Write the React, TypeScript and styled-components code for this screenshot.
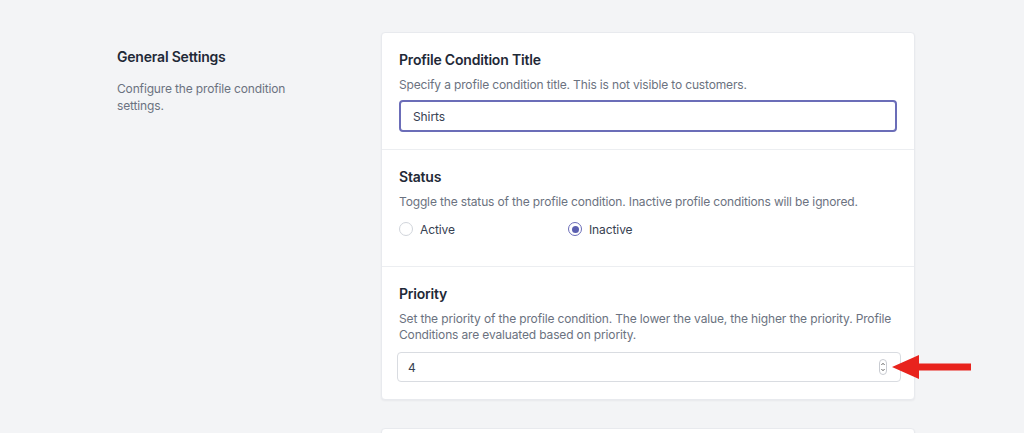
import React from "react";
import styled, { createGlobalStyle } from "styled-components";

const Global = createGlobalStyle`
  html, body { margin: 0; padding: 0; background: #f3f4f6; }
  body { font-family: Inter, "Noto Sans", "Liberation Sans", sans-serif; color: #1f2937; -webkit-font-smoothing: antialiased; }
  * { box-sizing: border-box; }
`;

const Page = styled.div`
  padding: 0 109px 0 117px;
  height: 433px;
  overflow: hidden;
`;

const PageHeading = styled.h1`
  margin: -22px 0 0 0;
  height: 22px;
  font-size: 20px;
  line-height: 24px;
  font-weight: 600;
  color: #374151;
`;

const Layout = styled.div`
  display: grid;
  grid-template-columns: 264px 1fr;
  margin-top: 32px;
`;

const Aside = styled.div`
  padding-top: 15px;
`;

const AsideTitle = styled.h2`
  margin: 0;
  font-size: 14px;
  line-height: 20px;
  font-weight: 600;
  letter-spacing: -0.2px;
  color: #1f2937;
`;

const AsideText = styled.p`
  margin: 13px 0 0 0;
  font-size: 12px;
  line-height: 17px;
  letter-spacing: -0.15px;
  color: #6b7280;
  width: 200px;
`;

const Stack = styled.div`
  display: flex;
  flex-direction: column;
  gap: 28px;
`;

const Card = styled.div<{ $min?: number }>`
  background: #ffffff;
  border: 1px solid #e8eaee;
  border-radius: 4px;
  box-shadow: 0 1px 2px rgba(17, 24, 39, 0.05);
  min-height: ${(p) => (p.$min ? `${p.$min}px` : "auto")};
`;

const Section = styled.div<{ $last?: boolean }>`
  padding: 17px;
  border-bottom: ${(p) => (p.$last ? "none" : "1px solid #eceef1")};
`;

const Label = styled.div`
  font-size: 14px;
  line-height: 20px;
  font-weight: 600;
  letter-spacing: -0.2px;
  color: #1f2937;
`;

const Help = styled.p`
  margin: 7px 0 0 0;
  font-size: 12px;
  line-height: 16px;
  letter-spacing: -0.15px;
  color: #6b7280;
`;

const TextInput = styled.div<{ $focused?: boolean }>`
  margin-top: ${(p) => (p.$focused ? "7px" : "9px")};
  height: ${(p) => (p.$focused ? "32px" : "30px")};
  display: flex;
  align-items: center;
  justify-content: space-between;
  padding: ${(p) => (p.$focused ? "0 12px" : "0 13px 0 10px")};
  border: ${(p) => (p.$focused ? "2px solid #6b6db8" : "1px solid #d9dce1")};
  border-radius: 4px;
  background: #fff;
  font-size: 12px;
  letter-spacing: -0.1px;
  color: #374151;
`;

const NumberInput = styled(TextInput)`
  margin-left: -2px;
  margin-right: -4px;
  position: relative;
`;

const RadioRow = styled.div`
  display: flex;
  padding: 11px 0 12px 0;
`;

const RadioItem = styled.label`
  display: flex;
  align-items: center;
  gap: 7px;
  width: 169px;
  height: 16px;
  font-size: 12px;
  letter-spacing: -0.1px;
  color: #374151;
`;

const RadioDot = styled.span<{ $checked?: boolean }>`
  width: 14px;
  height: 14px;
  border-radius: 50%;
  border: 1px solid ${(p) => (p.$checked ? "#6b6db8" : "#d1d5db")};
  background: #fff;
  display: inline-flex;
  align-items: center;
  justify-content: center;
  &::after {
    content: "";
    width: 7px;
    height: 7px;
    border-radius: 50%;
    background: ${(p) => (p.$checked ? "#5b5fb0" : "transparent")};
  }
`;

const Arrow = styled.svg`
  position: absolute;
  left: 494px;
  top: 1px;
`;

const Spinner = () => (
  <svg width="8" height="16" viewBox="0 0 8 16">
    <rect x="0.5" y="0.5" width="7" height="15" rx="3.5" fill="#fff" stroke="#c9ccd2" />
    <path d="M2.4 6 L4 4.3 L5.6 6" fill="none" stroke="#555" strokeWidth="0.9" />
    <path d="M2.4 10 L4 11.7 L5.6 10" fill="none" stroke="#555" strokeWidth="0.9" />
  </svg>
);

export default function App() {
  return (
    <>
      <Global />
      <Page>
        <PageHeading>Edit Profile Condition</PageHeading>
        <Layout>
          <Aside>
            <AsideTitle>General Settings</AsideTitle>
            <AsideText>Configure the profile condition settings.</AsideText>
          </Aside>
          <Stack>
            <Card>
              <Section>
                <Label>Profile Condition Title</Label>
                <Help>Specify a profile condition title. This is not visible to customers.</Help>
                <TextInput $focused>Shirts</TextInput>
              </Section>
              <Section>
                <Label>Status</Label>
                <Help>Toggle the status of the profile condition. Inactive profile conditions will be ignored.</Help>
                <RadioRow>
                  <RadioItem>
                    <RadioDot />
                    Active
                  </RadioItem>
                  <RadioItem>
                    <RadioDot $checked />
                    Inactive
                  </RadioItem>
                </RadioRow>
              </Section>
              <Section $last>
                <Label>Priority</Label>
                <Help>
                  Set the priority of the profile condition. The lower the value, the higher the priority. Profile
                  Conditions are evaluated based on priority.
                </Help>
                <NumberInput>
                  <span>4</span>
                  <Spinner />
                  <Arrow width="82" height="26" viewBox="0 0 82 26">
                    <polygon points="0,13 27,1 27,9.5 79,9.5 79,16.5 27,16.5 27,25" fill="#e8231d" />
                  </Arrow>
                </NumberInput>
              </Section>
            </Card>
            <Card $min={60} />
          </Stack>
        </Layout>
      </Page>
    </>
  );
}
